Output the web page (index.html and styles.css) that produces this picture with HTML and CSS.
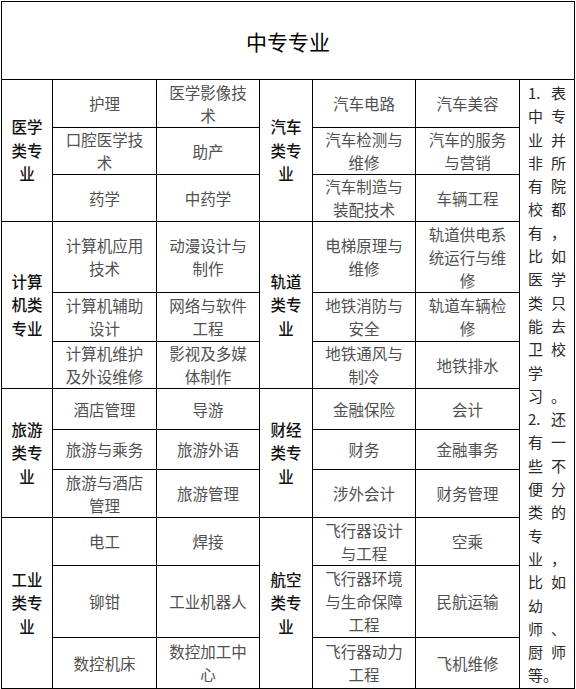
FILE: index.html
```html
<!DOCTYPE html>
<html lang="zh-CN">
<head>
<meta charset="utf-8">
<title>中专专业</title>
<link rel="stylesheet" href="styles.css">
</head>
<body>
<div class="sheet">
  <div class="title">中专专业</div>

  <div class="cat">医学类专业</div>
  <div class="cell">护理</div>
  <div class="cell">医学影像技术</div>
  <div class="cat">汽车类专业</div>
  <div class="cell">汽车电路</div>
  <div class="cell">汽车美容</div>
  <div class="note">1. 表中专业并非所有院校都有，比如医学类只能去卫校学习。2. 还有一些不便分类的专业，比如幼师、厨师等。</div>

  <div class="cell">口腔医学技术</div>
  <div class="cell">助产</div>
  <div class="cell">汽车检测与维修</div>
  <div class="cell">汽车的服务与营销</div>

  <div class="cell">药学</div>
  <div class="cell">中药学</div>
  <div class="cell">汽车制造与装配技术</div>
  <div class="cell">车辆工程</div>

  <div class="cat">计算机类专业</div>
  <div class="cell">计算机应用技术</div>
  <div class="cell">动漫设计与制作</div>
  <div class="cat">轨道类专业</div>
  <div class="cell">电梯原理与维修</div>
  <div class="cell">轨道供电系统运行与维修</div>

  <div class="cell">计算机辅助设计</div>
  <div class="cell">网络与软件工程</div>
  <div class="cell">地铁消防与安全</div>
  <div class="cell">轨道车辆检修</div>

  <div class="cell">计算机维护及外设维修</div>
  <div class="cell">影视及多媒体制作</div>
  <div class="cell">地铁通风与制冷</div>
  <div class="cell">地铁排水</div>

  <div class="cat">旅游类专业</div>
  <div class="cell">酒店管理</div>
  <div class="cell">导游</div>
  <div class="cat">财经类专业</div>
  <div class="cell">金融保险</div>
  <div class="cell">会计</div>

  <div class="cell">旅游与乘务</div>
  <div class="cell">旅游外语</div>
  <div class="cell">财务</div>
  <div class="cell">金融事务</div>

  <div class="cell">旅游与酒店管理</div>
  <div class="cell">旅游管理</div>
  <div class="cell">涉外会计</div>
  <div class="cell">财务管理</div>

  <div class="cat">工业类专业</div>
  <div class="cell">电工</div>
  <div class="cell">焊接</div>
  <div class="cat">航空类专业</div>
  <div class="cell">飞行器设计与工程</div>
  <div class="cell">空乘</div>

  <div class="cell">铆钳</div>
  <div class="cell">工业机器人</div>
  <div class="cell">飞行器环境与生命保障工程</div>
  <div class="cell">民航运输</div>

  <div class="cell">数控机床</div>
  <div class="cell">数控加工中心</div>
  <div class="cell">飞行器动力工程</div>
  <div class="cell">飞机维修</div>
</div>
</body>
</html>
```

FILE: styles.css
```css
html, body {
  margin: 0;
  padding: 0;
  background: #fff;
}

body {
  font-family: "Noto Sans CJK SC", "Noto Sans", sans-serif;
}

.sheet {
  display: grid;
  grid-template-columns: 50px 103px 102px 52px 102px 103px 54px;
  grid-template-rows: 77px 47px 46px 46px 70px 48px 46px 40px 39px 47px 47px 71px 50px;
  gap: 1px;
  padding: 1px;
  background: #000;
  width: max-content;
  margin: 1px 0 0 1px;
}

.sheet > div {
  background: #fff;
}

.title {
  grid-column: 1 / -1;
  display: flex;
  align-items: center;
  justify-content: center;
  font-size: 21px;
  color: #000;
}

.cat {
  grid-row: span 3;
  display: flex;
  align-items: center;
  justify-content: center;
  text-align: center;
  padding: 0 8px;
  font-size: 15.5px;
  line-height: 23.5px;
  font-weight: 500;
  color: #111;
}

.cell {
  display: flex;
  align-items: center;
  justify-content: center;
  text-align: center;
  padding: 0 6px;
  font-size: 15.5px;
  line-height: 23px;
  color: #505050;
}

.note {
  grid-column: 7;
  grid-row: 2 / 14;
  padding: 1px 8px 0 8px;
  font-size: 15px;
  line-height: 23.3px;
  text-align: justify;
  color: #2a2a2a;
}
```
